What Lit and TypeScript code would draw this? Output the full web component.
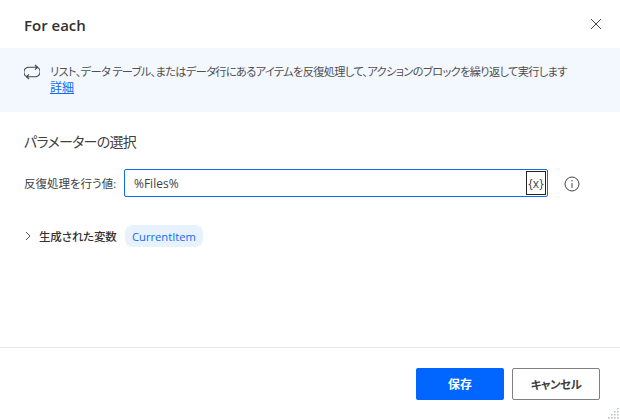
import { LitElement, html, css } from "lit";
import { customElement } from "lit/decorators.js";

@customElement("app-root")
export class AppRoot extends LitElement {
  static styles = css`
    :host {
      display: flex;
      flex-direction: column;
      position: relative;
      width: 620px;
      height: 420px;
      background: #fff;
      overflow: hidden;
      color: #333;
      font-family: "Open Sans", "Noto Sans CJK JP", sans-serif;
      font-size: 12px;
      font-feature-settings: "palt";
    }
    .title-bar {
      height: 48px;
      box-sizing: border-box;
      padding: 0 18px 0 24px;
      display: flex;
      align-items: center;
      justify-content: space-between;
    }
    .title {
      font-size: 15px;
      font-weight: 600;
      color: #323130;
      position: relative;
      top: 1px;
    }
    .close { display: block; width: 12px; height: 12px; margin-bottom: 1px; }
    .banner {
      height: 64px;
      box-sizing: border-box;
      background: #f3f7fe;
      padding: 16px 24px 0;
      display: flex;
      gap: 10px;
      line-height: 16px;
      color: #505050;
    }
    .loop { flex: none; width: 16px; height: 16px; }
    .banner p { margin: 0; white-space: nowrap; font-size: 11.2px; letter-spacing: -0.625px; }
    .banner a { color: #0f6cf0; text-decoration: underline; letter-spacing: 0; font-size: 12px; }
    .body { flex: 1; padding: 19px 24px 0; }
    h2 {
      margin: 0;
      font-size: 14px;
      line-height: 22px;
      font-weight: 400;
      color: #404040;
      letter-spacing: -0.7px;
    }
    .field {
      margin-top: 16px;
      display: flex;
      align-items: center;
      gap: 8px;
    }
    .field label { width: 92px; white-space: nowrap; color: #404040; font-size: 11.5px; }
    .input {
      width: 424px;
      height: 28px;
      box-sizing: border-box;
      border: 1px solid #0f6cf0;
      border-radius: 2px;
      display: flex;
      align-items: center;
      justify-content: space-between;
      padding: 0 1px 0 9px;
      color: #404040;
      font-size: 12px;
    }
    .var-btn {
      width: 20px;
      height: 24px;
      box-sizing: border-box;
      border: 1px solid #222;
      display: flex;
      align-items: center;
      justify-content: center;
      font-size: 12px;
      color: #444;
    }
    .info { width: 16px; height: 16px; margin: 2px 0 0 8px; flex: none; }
    .vars {
      margin-top: 28px;
      display: flex;
      align-items: center;
      height: 22px;
    }
    .chev { width: 6px; height: 10px; margin-right: 8px; margin-left: 1px; }
    .vars strong {
      font-weight: 500;
      font-size: 11.5px;
      color: #333;
      width: 77px;
      white-space: nowrap;
      letter-spacing: -0.15px;
      margin-right: 9px;
    }
    .chip {
      height: 22px;
      width: 78px;
      box-sizing: border-box;
      justify-content: center;
      border-radius: 8px;
      background: #e8f1fe;
      color: #0f6cf0;
      display: flex;
      align-items: center;
      font-size: 11.2px;
    }
    .footer {
      height: 73px;
      box-sizing: border-box;
      border-top: 1px solid #e8e8e8;
      padding: 20px 20px 0 0;
      display: flex;
      justify-content: flex-end;
      gap: 8px;
    }
    button {
      width: 88px;
      height: 32px;
      box-sizing: border-box;
      border-radius: 2px;
      font: inherit;
      font-feature-settings: "palt";
      font-weight: 600;
      padding: 0;
    }
    .save { background: #0066ff; border: 0; color: #fff; }
    .cancel { background: #fff; border: 1px solid #808080; color: #404040; font-size: 11.5px; letter-spacing: -0.5px; }
    .grip { position: absolute; right: 1px; bottom: 1px; width: 12px; height: 12px; }
  `;

  render() {
    return html`
      <div class="title-bar">
        <span class="title">For each</span>
        <svg class="close" viewBox="0 0 12 12" fill="none" stroke="#444" stroke-width="1">
          <path d="M1 1l10 10M11 1L1 11" />
        </svg>
      </div>
      <div class="banner">
        <svg class="loop" viewBox="0 0 16 16" fill="none" stroke="#444" stroke-width="1.1">
          <path d="M4.5 13.2A5 5 0 0 1 5.2 3.2h8.3" />
          <path d="M11 .8l2.6 2.4L11 5.6" />
          <path d="M11.5 2.8A5 5 0 0 1 10.8 12.8H2.5" />
          <path d="M5 10.4l-2.6 2.4L5 15.2" />
        </svg>
        <p>リスト、データ テーブル、またはデータ行にあるアイテムを反復処理して、アクションのブロックを繰り返して実行します<br /><a href="#">詳細</a></p>
      </div>
      <div class="body">
        <h2>パラメーターの選択</h2>
        <div class="field">
          <label>反復処理を行う値:</label>
          <div class="input">
            <span>%Files%</span>
            <span class="var-btn">{x}</span>
          </div>
          <svg class="info" viewBox="0 0 16 16" fill="none" stroke="#444" stroke-width="1">
            <circle cx="8" cy="8" r="7" />
            <path d="M8 7v5" />
            <circle cx="8" cy="4.8" r=".7" fill="#444" stroke="none" />
          </svg>
        </div>
        <div class="vars">
          <svg class="chev" viewBox="0 0 6 10" fill="none" stroke="#555" stroke-width="1">
            <path d="M1 1l4 4-4 4" />
          </svg>
          <strong>生成された変数</strong>
          <span class="chip">CurrentItem</span>
        </div>
      </div>
      <div class="footer">
        <button class="save">保存</button>
        <button class="cancel">キャンセル</button>
      </div>
      <svg class="grip" viewBox="0 0 12 12" fill="#b4bcc8">
        <rect x="10" y="1" width="1.5" height="1.5" />
        <rect x="7" y="4" width="1.5" height="1.5" /><rect x="10" y="4" width="1.5" height="1.5" />
        <rect x="4" y="7" width="1.5" height="1.5" /><rect x="7" y="7" width="1.5" height="1.5" /><rect x="10" y="7" width="1.5" height="1.5" />
        <rect x="1" y="10" width="1.5" height="1.5" /><rect x="4" y="10" width="1.5" height="1.5" /><rect x="7" y="10" width="1.5" height="1.5" /><rect x="10" y="10" width="1.5" height="1.5" />
      </svg>
    `;
  }
}
